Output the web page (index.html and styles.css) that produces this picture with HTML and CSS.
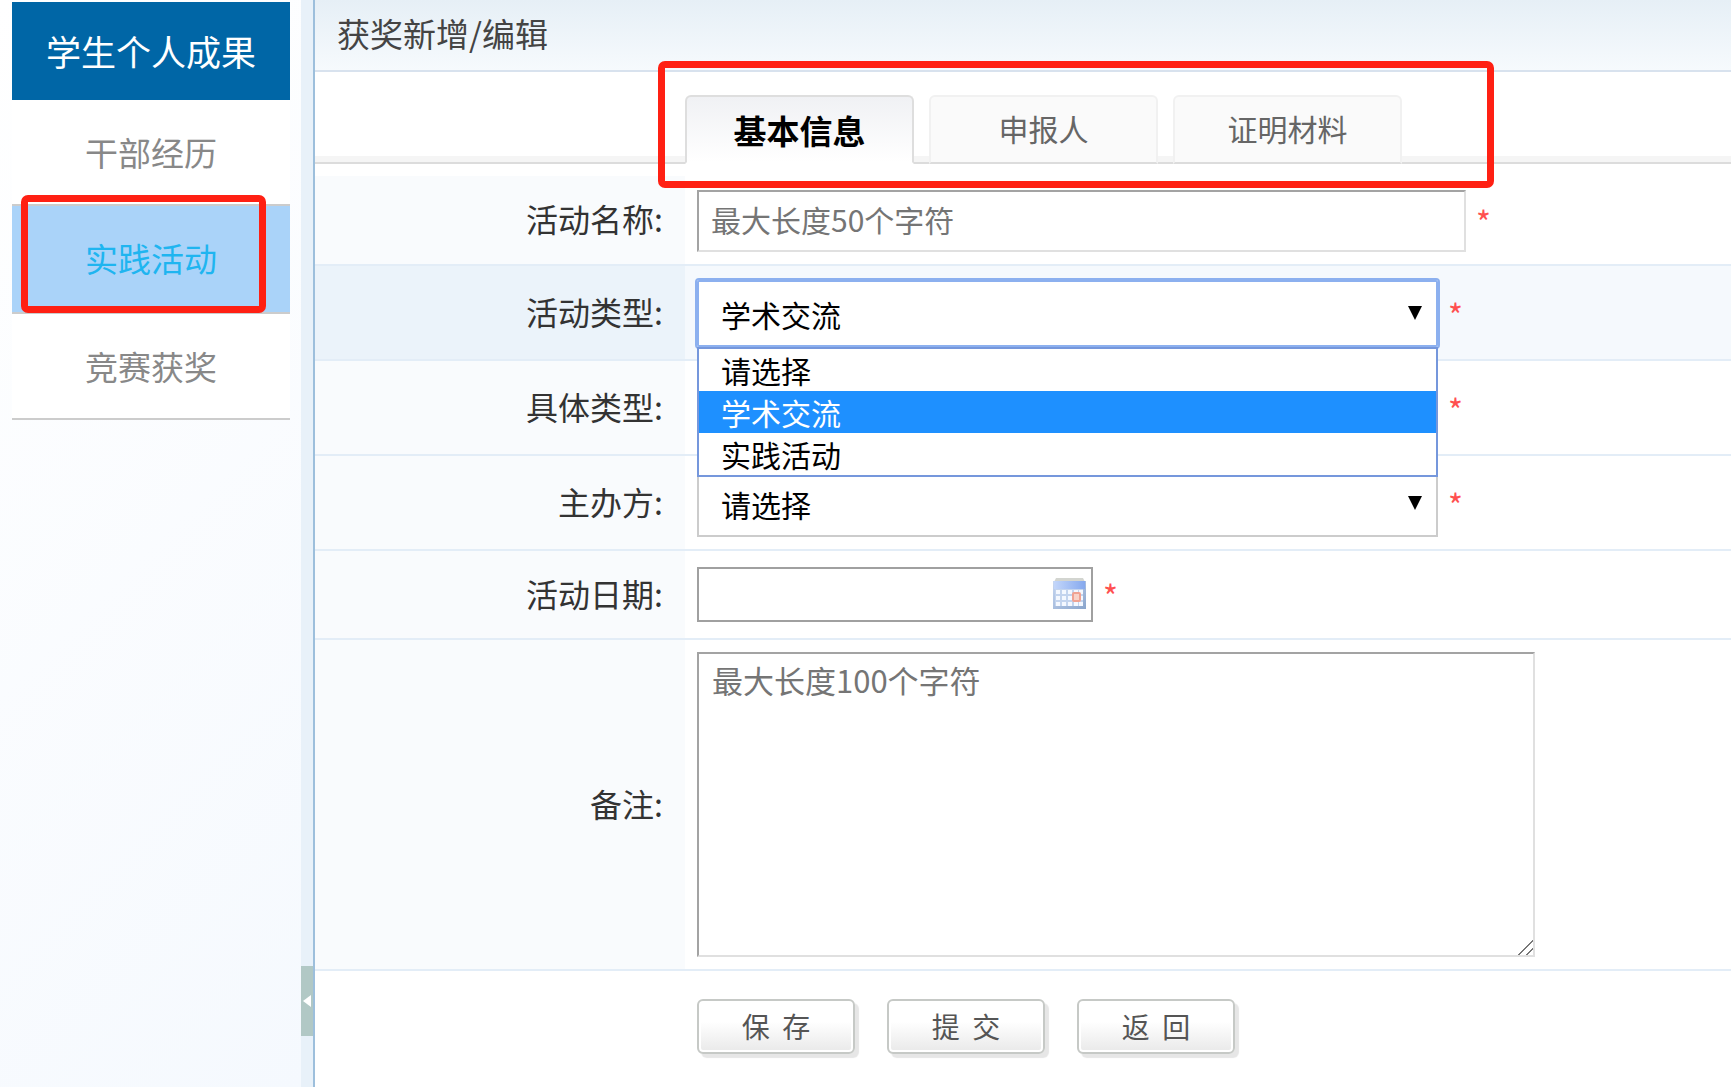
FILE: index.html
```html
<!DOCTYPE html>
<html lang="zh-CN">
<head>
    <meta charset="UTF-8">
    <meta name="viewport" content="width=device-width, initial-scale=1.0">
    <title>获奖新增/编辑</title>
    <link rel="stylesheet" href="styles.css">
</head>
<body>
    <aside class="sidebar">
        <h2 class="sidebar-title">学生个人成果</h2>
        <nav class="menu">
            <a href="#">干部经历</a>
            <a href="#" class="active">实践活动<span class="mark mark-menu"></span></a>
            <a href="#">竞赛获奖</a>
        </nav>
    </aside>

    <div class="splitter">
        <button type="button" class="collapse" aria-label="收起">
            <svg width="8" height="12" viewBox="0 0 8 12"><path d="M8 0v12L0 6z" fill="#fff"/></svg>
        </button>
    </div>

    <main>
        <h1 class="page-title">获奖新增/编辑</h1>

        <div class="tab-bar">
            <div class="tabs">
                <button type="button" class="tab active">基本信息</button>
                <button type="button" class="tab">申报人</button>
                <button type="button" class="tab">证明材料</button>
                <span class="mark mark-tabs"></span>
            </div>
        </div>

        <form>
            <div class="row">
                <label for="name">活动名称:</label>
                <div class="field">
                    <input type="text" id="name" class="text-input" placeholder="最大长度50个字符">
                    <span class="required">*</span>
                </div>
            </div>
            <div class="row current">
                <label for="type">活动类型:</label>
                <div class="field">
                    <div class="select-box open">
                        <select id="type">
                            <option>请选择</option>
                            <option selected>学术交流</option>
                            <option>实践活动</option>
                        </select>
                        <ul class="options">
                            <li>请选择</li>
                            <li class="selected">学术交流</li>
                            <li>实践活动</li>
                        </ul>
                    </div>
                    <span class="required">*</span>
                </div>
            </div>
            <div class="row">
                <label for="subtype">具体类型:</label>
                <div class="field">
                    <div class="select-box">
                        <select id="subtype">
                            <option>请选择</option>
                        </select>
                    </div>
                    <span class="required">*</span>
                </div>
            </div>
            <div class="row">
                <label for="host">主办方:</label>
                <div class="field">
                    <div class="select-box">
                        <select id="host">
                            <option>请选择</option>
                        </select>
                    </div>
                    <span class="required">*</span>
                </div>
            </div>
            <div class="row date-row">
                <label for="date">活动日期:</label>
                <div class="field">
                    <div class="date-box">
                        <input type="text" id="date">
                        <button type="button" class="calendar" aria-label="选择日期">
                            <svg width="34" height="32" viewBox="0 0 34 32">
                                <defs>
                                    <linearGradient id="head" x1="0" x2="1">
                                        <stop offset="0" stop-color="#c3d6fa"/>
                                        <stop offset="1" stop-color="#86a9ee"/>
                                    </linearGradient>
                                    <linearGradient id="sheet" x1="0" y1="0" x2="1" y2="1">
                                        <stop offset="0" stop-color="#c8d8f2"/>
                                        <stop offset="1" stop-color="#8aa5cc"/>
                                    </linearGradient>
                                </defs>
                                <path d="M3 0h27l2 4H1z" fill="#d3d5d0"/>
                                <rect x="0" y="3" width="33" height="28" fill="url(#sheet)"/>
                                <rect x="1" y="3" width="31" height="8" fill="url(#head)"/>
                                <rect x="2" y="11" width="28" height="17" fill="#c3d4ee"/>
                                <path d="M3 12h4v4H3zM9 12h4v4H9zM15 12h4v4h-4zM21 12h4v4h-4zM26 12h4v4h-4zM3 18h4v4H3zM9 18h4v4H9zM15 18h4v4h-4zM26 18h4v4h-4zM3 24h4v4H3zM9 24h4v4H9zM15 24h4v4h-4zM21 24h4v4h-4zM26 24h4v4h-4z" fill="#f4f8ff"/>
                                <rect x="20" y="15" width="7" height="8" rx="1" fill="#f8d2c8" stroke="#f0a292" stroke-width="2"/>
                            </svg>
                        </button>
                    </div>
                    <span class="required">*</span>
                </div>
            </div>
            <div class="row remark-row">
                <label for="remark">备注:</label>
                <div class="field">
                    <textarea id="remark" placeholder="最大长度100个字符"></textarea>
                </div>
            </div>
            <div class="actions">
                <button type="submit" class="btn">保&nbsp;&nbsp;存</button>
                <button type="button" class="btn">提&nbsp;&nbsp;交</button>
                <button type="button" class="btn">返&nbsp;&nbsp;回</button>
            </div>
        </form>
    </main>
</body>
</html>
```
FILE: styles.css
```css
:root {
    --title-blue: #0066a6;
    --active-blue: #aad3f9;
    --focus-blue: #8cb0ef;
    --row-line: #e3edf7;
    --mark-red: #ff2013;
    --label-width: 370px;
}

* {
    margin: 0;
    padding: 0;
    box-sizing: border-box;
}

body {
    font-family: "Noto Sans CJK SC", sans-serif;
    font-size: 30px;
    line-height: 42px;
    color: #333;
    background-color: #fff;
    min-height: 100vh;
    display: flex;
}

button,
input,
select,
textarea {
    font: inherit;
    color: inherit;
}

/* left menu */
.sidebar {
    flex: none;
    width: 301px;
    padding: 2px 11px 0 12px;
    background: linear-gradient(135deg, #fff, #f5f9fe);
}

.sidebar-title {
    height: 98px;
    line-height: 98px;
    background-color: var(--title-blue);
    color: #fff;
    font-size: 35px;
    font-weight: 400;
    text-align: center;
}

.menu a {
    position: relative;
    display: block;
    height: 106px;
    line-height: 104px;
    border-bottom: 2px solid #ccc;
    background-color: #fff;
    color: #888;
    font-size: 33px;
    text-align: center;
    text-decoration: none;
}

.menu a.active {
    height: 108px;
    background-color: var(--active-blue);
    color: #1fb5f0;
}

/* red highlight frames */
.mark {
    position: absolute;
    border: 7px solid var(--mark-red);
    border-radius: 7px;
    pointer-events: none;
    z-index: 5;
}

.mark-menu {
    inset: -11px 24px -1px 9px;
}

.mark-tabs {
    inset: -34px -92px -24px -27px;
}

.splitter {
    flex: none;
    width: 14px;
    display: flex;
    flex-direction: column;
    justify-content: flex-end;
    padding-bottom: 51px;
    background-color: #e8f1f9;
    border-right: 2px solid #9dbfdc;
}

.collapse {
    height: 70px;
    display: flex;
    align-items: center;
    justify-content: center;
    border: none;
    background-color: #b1c8c5;
    cursor: pointer;
}

main {
    flex: 1;
    min-width: 0;
}

.page-title {
    height: 72px;
    line-height: 66px;
    padding-left: 22px;
    border-bottom: 2px solid #d8e2ee;
    background: linear-gradient(#e6eff6, #f6fafd);
    color: #444;
    font-size: 33px;
    font-weight: 400;
}

/* tabs */
.tab-bar {
    display: flex;
    padding: 23px 0 0 var(--label-width);
    margin-bottom: 12px;
    background: linear-gradient(#f5f5f5, #f5f5f5) left bottom / 100% 6px no-repeat;
    border-bottom: 2px solid #dcdcdc;
}

.tabs {
    position: relative;
    display: flex;
    gap: 15px;
    margin-bottom: -2px;
}

.tab {
    width: 229px;
    height: 69px;
    padding-bottom: 3px;
    border: 2px solid #f1f1f1;
    border-bottom-color: #dcdcdc;
    border-radius: 6px 6px 0 0;
    background-color: #fafafa;
    color: #666;
    cursor: pointer;
}

.tab.active {
    padding-bottom: 0;
    border-color: #dedede;
    border-bottom-color: #fff;
    background: linear-gradient(#f0f1f4, #fff);
    color: #000;
    font-size: 33px;
    font-weight: 700;
}

/* form */
.row {
    display: flex;
    border-bottom: 2px solid var(--row-line);
}

.row label {
    flex: none;
    width: var(--label-width);
    display: flex;
    align-items: center;
    justify-content: flex-end;
    padding: 0 22px 4px 0;
    background-color: #f9fbfd;
    font-size: 32px;
}

.row.current {
    background-color: #f5f9fd;
}

.row.current label {
    background-color: #ebf3fa;
}

.field {
    flex: 1;
    min-width: 0;
    display: flex;
    align-items: center;
    gap: 10px;
    padding: 14px 12px 12px;
}

.text-input,
.date-box input,
textarea {
    border: 2px solid #e0e0e0;
    border-top-color: #a3a3a3;
    border-left-color: #a3a3a3;
    background-color: #fff;
}

.text-input {
    width: 769px;
    height: 62px;
    padding: 0 12px 4px;
}

::placeholder {
    color: #757575;
    opacity: 1;
}

.select-box {
    position: relative;
    width: 741px;
}

.select-box::after {
    content: "";
    position: absolute;
    top: 26px;
    right: 16px;
    border: 7px solid transparent;
    border-top: 14px solid #000;
    border-bottom: none;
    pointer-events: none;
}

select {
    display: block;
    width: 100%;
    height: 67px;
    padding: 0 22px;
    border: 2px solid #ccc;
    border-radius: 0;
    background-color: #fff;
    color: #000;
    appearance: none;
}

.open select {
    border-color: var(--focus-blue);
    outline: 2px solid var(--focus-blue);
    border-radius: 2px;
}

.options {
    position: absolute;
    top: 100%;
    left: 0;
    right: 0;
    z-index: 3;
    border: 2px solid #7597dc;
    background-color: #fff;
    color: #000;
    list-style: none;
}

.options li {
    padding: 0 22px;
}

.options .selected {
    background-color: #1e90ff;
    color: #fff;
}

.required {
    color: #ff5050;
    font-size: 32px;
}

.date-row .field {
    padding: 16px 12px;
}

.date-box {
    position: relative;
    width: 396px;
}

.date-box input {
    display: block;
    width: 100%;
    height: 55px;
    padding: 0 48px 0 12px;
    border-color: #a0a0a0;
}

.calendar {
    position: absolute;
    top: 11px;
    right: 6px;
    display: flex;
    border: none;
    background: none;
    cursor: pointer;
}

.remark-row .field {
    padding: 12px;
}

textarea {
    display: block;
    width: 838px;
    height: 305px;
    padding: 5px 13px;
    font-size: 31px;
    resize: both;
}

/* wide two-line grip in the corner */
textarea::-webkit-resizer {
    background: linear-gradient(135deg, transparent 48%, #777 48%, #777 55%, transparent 55%, transparent 74%, #777 74%, #777 81%, transparent 81%);
}

.actions {
    display: flex;
    gap: 32px;
    padding: 28px 0 28px calc(var(--label-width) + 12px);
}

.btn {
    width: 158px;
    height: 55px;
    padding-bottom: 2px;
    border: 2px solid #c6c9c6;
    border-radius: 6px;
    background: linear-gradient(#fff 40%, #e9e9e9);
    box-shadow: inset 0 0 0 2px #fff, 4px 4px 1px #e6e6e6;
    color: #555;
    font-size: 28px;
    line-height: 42px;
    cursor: pointer;
}
```
